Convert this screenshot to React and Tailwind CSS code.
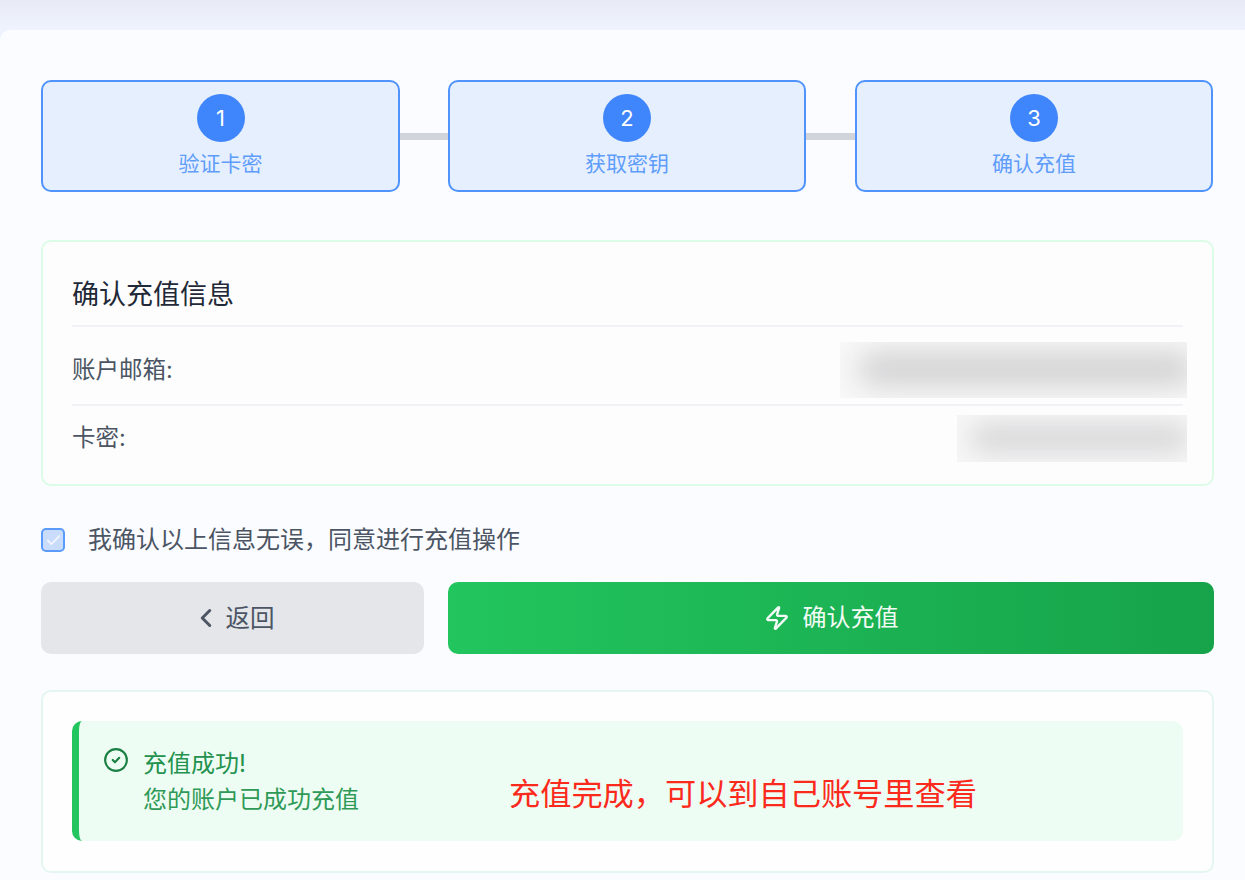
import { ChevronLeft, Zap, CircleCheck, Check } from 'lucide-react';

function Step({ num, label, width }) {
  return (
    <div className={`${width} h-[112px] flex flex-col items-center pt-[12px] rounded-[10px] border-2 border-[#4f93fb] bg-[#e6effe]`}>
      <div className="w-[48px] h-[48px] rounded-full bg-[#3f85fb] flex items-center justify-center text-white text-[22px] leading-none">
        {num}
      </div>
      <div className="mt-[7px] text-[#5f9dfb] text-[21px] leading-[30px]">{label}</div>
    </div>
  );
}

export default function App() {
  return (
    <div className="w-[1245px] h-[880px] overflow-hidden bg-[#eff3fd] font-['Inter','Noto_Sans_CJK_SC',sans-serif]">
      <div className="h-[30px] bg-gradient-to-b from-[#e8ebf6] to-[#eff3fd]" />
      <div className="h-[850px] rounded-tl-[10px] bg-[#fbfcff] pl-[41px] pr-[31px] pt-[50px]">
        {/* steps */}
        <div className="flex items-center">
          <Step num={1} label="验证卡密" width="w-[359px]" />
          <div className="w-[48px] h-[7px] mt-[1px] bg-[#d1d5db]" />
          <Step num={2} label="获取密钥" width="w-[358px]" />
          <div className="w-[49px] h-[7px] mt-[1px] bg-[#d1d5db]" />
          <Step num={3} label="确认充值" width="w-[358px]" />
        </div>

        {/* info */}
        <div className="mt-[48px] h-[246px] rounded-[10px] border-2 border-[#dcfce7] bg-[#fdfdfe] px-[29px] pt-[29px]">
          <div className="h-[56px] pt-[4px] border-b-2 border-[#f1f2f5] text-[#1f2937] text-[27px] leading-[40px]">确认充值信息</div>
          <div className="h-[79px] pt-[8px] border-b-2 border-[#f1f2f5] flex items-center justify-between">
            <span className="text-[#4b5563] text-[23.5px]">账户邮箱:</span>
            <div className="relative -mr-[4px] w-[347px] h-[56px] overflow-hidden bg-[#f8f8f9]">
              <div className="absolute left-[18px] -right-[8px] top-[10px] h-[34px] rounded-full bg-[#d2d2d3] blur-[14px]" />
            </div>
          </div>
          <div className="h-[64px] flex items-center justify-between">
            <span className="text-[#4b5563] text-[23.5px]">卡密:</span>
            <div className="relative -mr-[4px] w-[230px] h-[47px] overflow-hidden bg-[#f6f6f7]">
              <div className="absolute left-[14px] -right-[2px] top-[9px] h-[28px] rounded-full bg-[#d8d8d9] blur-[12px]" />
            </div>
          </div>
        </div>

        {/* confirm */}
        <div className="mt-[38px] flex items-center">
          <div className="w-[24px] h-[24px] rounded-[5px] border-2 border-[#5b9bfb] bg-[#c9dcfc] flex items-center justify-center">
            <Check size={17} strokeWidth={2.5} className="text-[#f2f6fe]" />
          </div>
          <span className="ml-[23px] text-[#4b5563] text-[24px] leading-[32px]">我确认以上信息无误，同意进行充值操作</span>
        </div>

        {/* buttons */}
        <div className="mt-[26px] flex gap-[24px]">
          <button className="w-[383px] h-[72px] rounded-[10px] bg-[#e5e6ea] flex items-center justify-center text-[#4b5563] text-[24.5px]">
            <ChevronLeft size={30} strokeWidth={2.4} className="mr-[5px]" />
            返回
          </button>
          <button className="flex-1 h-[72px] rounded-[10px] bg-gradient-to-r from-[#22c55e] to-[#16a34a] flex items-center justify-center text-[#f2fbf5] text-[24px]">
            <Zap size={26} strokeWidth={2.2} className="mr-[13px]" />
            确认充值
          </button>
        </div>

        {/* result */}
        <div className="mt-[36px] h-[183px] rounded-[10px] border-2 border-[#e5f6f0] bg-[#fefeff] px-[29px] pt-[29px]">
          <div className="relative h-[120px] rounded-[10px] border-l-[7px] border-[#22c55e] bg-[#eefdf3] pl-[24px] pt-[25px] flex">
            <CircleCheck size={26} strokeWidth={2} className="text-[#1c7f43] mt-[1px]" />
            <div className="ml-[14px] text-[#2f9a57] text-[24px] leading-[36px]">
              <div className="text-[#23924e]">充值成功!</div>
              <div>您的账户已成功充值</div>
            </div>
            <div className="absolute left-[430px] top-[50px] text-[#fb2a1c] text-[31.2px] leading-[46px]">充值完成，可以到自己账号里查看</div>
          </div>
        </div>
      </div>
    </div>
  );
}
